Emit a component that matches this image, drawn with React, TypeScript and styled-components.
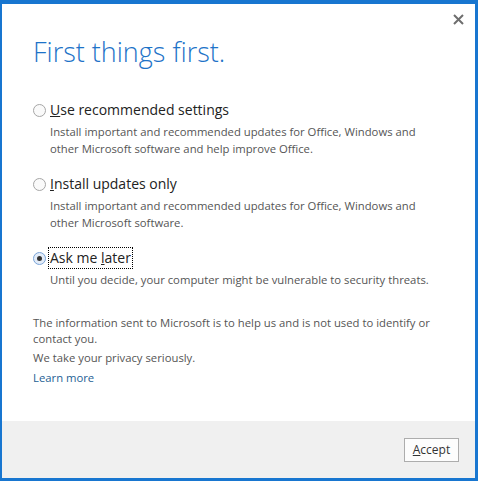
import React from "react";
import styled, { createGlobalStyle } from "styled-components";

const Global = createGlobalStyle`
  html, body { margin: 0; padding: 0; background: #ffffff; }
  body { font-family: "Segoe UI", "Open Sans", "Noto Sans", sans-serif; }
`;

const Frame = styled.div`
  box-sizing: border-box;
  width: 478px;
  height: 481px;
  border-style: solid;
  border-color: #1876d0;
  border-width: 4px 3px 3px 2px;
  display: flex;
  flex-direction: column;
  background: #ffffff;
  position: relative;
`;

const Close = styled.button`
  position: absolute;
  top: 7px;
  right: 9px;
  width: 16px;
  height: 16px;
  padding: 0;
  border: none;
  background: transparent;
  display: flex;
  align-items: center;
  justify-content: center;
`;

const Body = styled.div`
  flex: 1;
  padding: 30px 30px 0 31px;
  display: flex;
  flex-direction: column;
`;

const Title = styled.h1`
  margin: 0 0 30px 0;
  font-family: "Open Sans", sans-serif;
  font-weight: 300;
  font-size: 27px;
  line-height: 36px;
  color: #1e73c8;
`;

const Option = styled.div<{ $last?: boolean }>`
  display: grid;
  grid-template-columns: 17px 1fr;
  margin-bottom: ${(p) => (p.$last ? "27px" : "17px")};
`;

const Radio = styled.span<{ $checked?: boolean }>`
  box-sizing: border-box;
  width: 13px;
  height: 13px;
  margin-top: 4px;
  border-radius: 50%;
  border: 1px solid ${(p) => (p.$checked ? "#7aa4d8" : "#a6a6a6")};
  background: ${(p) => (p.$checked ? "#e3ecf8" : "#fafafa")};
  display: flex;
  align-items: center;
  justify-content: center;
  &::after {
    content: "";
    display: ${(p) => (p.$checked ? "block" : "none")};
    width: 5px;
    height: 5px;
    border-radius: 50%;
    background: #333;
  }
`;

const Label = styled.span<{ $focused?: boolean }>`
  justify-self: start;
  font-family: "Open Sans", sans-serif;
  font-size: 14px;
  line-height: 20px;
  color: #222;
  outline: ${(p) => (p.$focused ? "1px dotted #000" : "none")};
  outline-offset: 0;
  padding: 0 1px;
  margin-left: -1px;
`;

const Desc = styled.p`
  grid-column: 2;
  margin: 3px 0 0 0;
  font-family: "Open Sans", sans-serif;
  font-size: 11.3px;
  line-height: 17px;
  color: #555;
`;

const Info = styled.p<{ $gap?: number }>`
  margin: ${(p) => p.$gap ?? 0}px 0 0 0;
  font-family: "Open Sans", sans-serif;
  font-size: 11.3px;
  line-height: 16px;
  color: #555;
`;

const Link = styled.a`
  display: block;
  margin-top: 3px;
  font-family: "Open Sans", sans-serif;
  font-size: 11.3px;
  line-height: 17px;
  color: #255f95;
  text-decoration: none;
`;

const Footer = styled.div`
  height: 57px;
  background: #f0f0f0;
  display: flex;
  justify-content: flex-end;
  align-items: center;
  padding-right: 16px;
`;

const Button = styled.button`
  box-sizing: border-box;
  width: 55px;
  height: 24px;
  border: 1px solid #adadad;
  background: #fdfdfd;
  font-family: "Open Sans", sans-serif;
  font-size: 12px;
  color: #333;
  padding: 0;
`;

const U = styled.span`
  text-decoration: underline;
`;

export default function App() {
  return (
    <>
      <Global />
      <Frame>
        <Close aria-label="Close">
          <svg width="11" height="11" viewBox="0 0 11 11">
            <path d="M1 1 L10 10 M10 1 L1 10" stroke="#6e6e6e" strokeWidth="2" />
          </svg>
        </Close>
        <Body>
          <Title>First things first.</Title>
          <Option>
            <Radio />
            <Label><U>U</U>se recommended settings</Label>
            <Desc>
              Install important and recommended updates for Office, Windows and
              <br />
              other Microsoft software and help improve Office.
            </Desc>
          </Option>
          <Option>
            <Radio />
            <Label><U>I</U>nstall updates only</Label>
            <Desc>
              Install important and recommended updates for Office, Windows and
              <br />
              other Microsoft software.
            </Desc>
          </Option>
          <Option $last>
            <Radio $checked />
            <Label $focused>Ask me <U>l</U>ater</Label>
            <Desc>Until you decide, your computer might be vulnerable to security threats.</Desc>
          </Option>
          <Info>
            The information sent to Microsoft is to help us and is not used to identify or
            <br />
            contact you.
          </Info>
          <Info $gap={3}>We take your privacy seriously.</Info>
          <Link href="#">Learn more</Link>
        </Body>
        <Footer>
          <Button><U>A</U>ccept</Button>
        </Footer>
      </Frame>
    </>
  );
}
